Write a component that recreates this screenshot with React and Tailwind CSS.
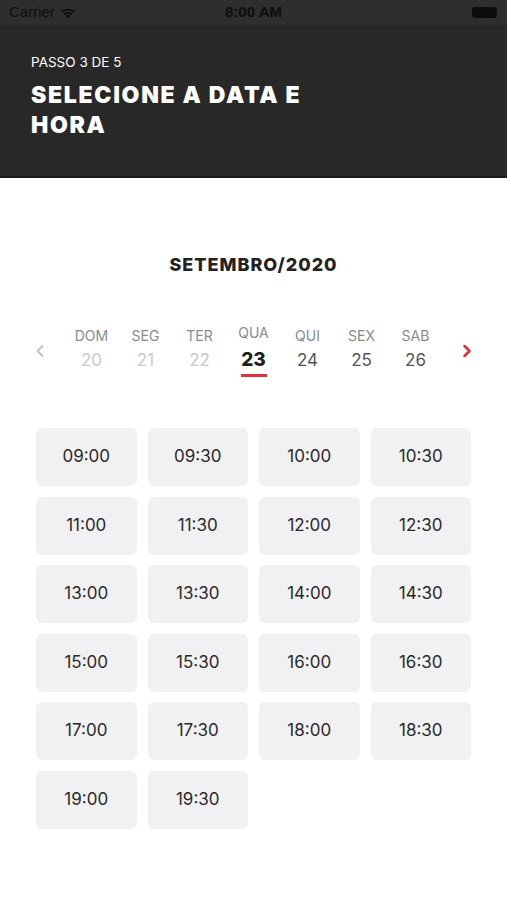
import { ChevronLeft, ChevronRight } from 'lucide-react';

const days = [
  { name: 'DOM', num: 20, state: 'past' },
  { name: 'SEG', num: 21, state: 'past' },
  { name: 'TER', num: 22, state: 'past' },
  { name: 'QUA', num: 23, state: 'active' },
  { name: 'QUI', num: 24, state: 'future' },
  { name: 'SEX', num: 25, state: 'future' },
  { name: 'SAB', num: 26, state: 'future' },
];

const slots = [
  '09:00', '09:30', '10:00', '10:30',
  '11:00', '11:30', '12:00', '12:30',
  '13:00', '13:30', '14:00', '14:30',
  '15:00', '15:30', '16:00', '16:30',
  '17:00', '17:30', '18:00', '18:30',
  '19:00', '19:30',
];

const StatusBar = () => (
  <div className="h-[25px] bg-[#2e2e2e] flex items-center justify-between px-[9px] text-[#0d0d0d] font-['Liberation_Sans',sans-serif]">
    <div className="flex items-center gap-[5px] text-[15px]">
      <span>Carrier</span>
      <svg width="16" height="12" viewBox="0 0 16 12" fill="#0d0d0d">
        <path d="M8 11.5 5.6 9a3.4 3.4 0 0 1 4.8 0L8 11.5Z" />
        <path d="M3.4 6.8a6.5 6.5 0 0 1 9.2 0l-1.3 1.3a4.7 4.7 0 0 0-6.6 0L3.4 6.8Z" />
        <path d="M1.1 4.5a9.8 9.8 0 0 1 13.8 0l-1.3 1.3a8 8 0 0 0-11.2 0L1.1 4.5Z" />
      </svg>
    </div>
    <span className="text-[15px] font-semibold absolute left-1/2 -translate-x-1/2">8:00 AM</span>
    <div className="w-[25px] h-[11px] rounded-[3px] bg-[#0d0d0d] mr-[1px]" />
  </div>
);

const Header = () => (
  <header className="bg-[#282828] h-[153px] border-b-2 border-[#1c1c1c] px-[31px] pt-[29px]">
    <p className="text-white text-[13.5px] leading-[16px] font-['Inter',sans-serif]">PASSO 3 DE 5</p>
    <h1 className="mt-[10px] text-white text-[23px] leading-[30px] font-black tracking-[1.7px] font-['Inter',sans-serif] max-w-[300px]">
      SELECIONE A DATA E HORA
    </h1>
  </header>
);

const DayPicker = () => (
  <div className="flex items-start justify-between px-[30px]">
    <button className="h-[46px] flex items-center" aria-label="Anterior">
      <ChevronLeft className="w-[20px] h-[20px] text-[#c4c4c4]" strokeWidth={2.5} />
    </button>
    <div className="flex">
      {days.map((d) => (
        <div key={d.num} className="w-[54px] flex flex-col items-center">
          <span
            className={`text-[14px] leading-[16px] text-[#8a8a8e] font-['Inter',sans-serif] ${
              d.state === 'active' ? '-mt-[3px] mb-[3px]' : ''
            }`}
          >
            {d.name}
          </span>
          <span
            className={`mt-[6px] text-[17px] leading-[20px] font-['Inter',sans-serif] ${
              d.state === 'past'
                ? 'text-[#c9c9cc]'
                : d.state === 'active'
                ? 'text-[#1e1e1e] font-extrabold text-[19px]'
                : 'text-[#555558]'
            }`}
          >
            {d.num}
          </span>
          {d.state === 'active' && <div className="mt-[4px] w-[26px] h-[3px] bg-[#e3303a]" />}
        </div>
      ))}
    </div>
    <button className="h-[46px] flex items-center" aria-label="Próximo">
      <ChevronRight className="w-[20px] h-[20px] text-[#e3303a]" strokeWidth={3} />
    </button>
  </div>
);

export default function App() {
  return (
    <div className="w-[507px] min-h-[900px] bg-white relative">
      <StatusBar />
      <Header />

      <h2 className="mt-[75px] text-center text-[18px] leading-[24px] font-extrabold text-[#222] tracking-[1px] font-['Inter',sans-serif]">
        SETEMBRO/2020
      </h2>

      <div className="mt-[51px]">
        <DayPicker />
      </div>

      <div className="mt-[51px] mx-[36px] grid grid-cols-4 gap-x-[11px] gap-y-[10.5px]">
        {slots.map((s) => (
          <button
            key={s}
            className="h-[58px] rounded-[6px] bg-[#f1f1f3] flex items-center justify-center text-[17px] text-[#2a2a2a] font-['Inter',sans-serif]"
          >
            {s}
          </button>
        ))}
      </div>
    </div>
  );
}
